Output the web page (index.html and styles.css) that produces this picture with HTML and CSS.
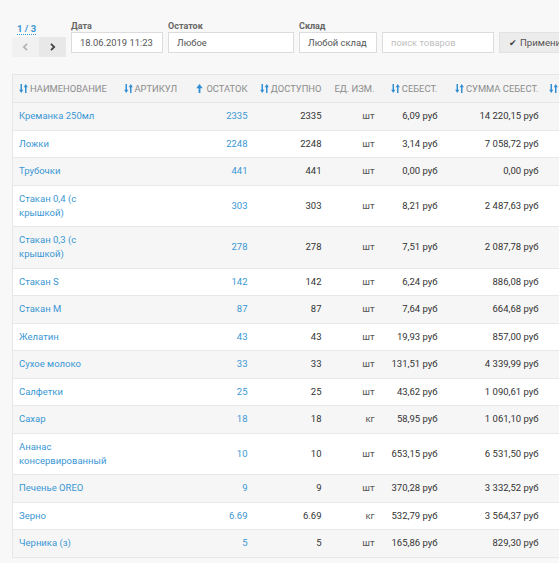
FILE: index.html
```html
<!DOCTYPE html>
<html lang="ru">
<head>
    <meta charset="UTF-8">
    <meta name="viewport" content="width=device-width, initial-scale=1.0">
    <title>Остатки товаров</title>
    <link rel="stylesheet" href="styles.css">
</head>
<body>
    <div class="page">
        <!-- Filters toolbar -->
        <div class="toolbar">
            <div class="pager">
                <span class="pager-count">1 / 3</span>
                <div class="pager-buttons">
                    <button class="pager-btn prev" disabled>
                        <svg width="7" height="8" viewBox="0 0 7 8"><path d="M5 0.8 L1.8 4 L5 7.2" fill="none" stroke="currentColor" stroke-width="1.8"/></svg>
                    </button>
                    <button class="pager-btn next">
                        <svg width="7" height="8" viewBox="0 0 7 8"><path d="M2 0.8 L5.2 4 L2 7.2" fill="none" stroke="currentColor" stroke-width="1.8"/></svg>
                    </button>
                </div>
            </div>
            <div class="field field-date">
                <label for="date">Дата</label>
                <input type="text" id="date" value="18.06.2019 11:23">
            </div>
            <div class="field field-rest">
                <label for="rest">Остаток</label>
                <input type="text" id="rest" value="Любое">
            </div>
            <div class="field field-store">
                <label for="store">Склад</label>
                <input type="text" id="store" value="Любой склад">
            </div>
            <div class="field field-search">
                <input type="text" id="search" placeholder="поиск товаров">
            </div>
            <div class="field field-apply">
                <button class="apply-btn"><span class="check">✔</span>Применить</button>
            </div>
        </div>

        <!-- Stock table -->
        <table class="stock">
            <colgroup>
                <col class="c-name"><col class="c-sku"><col class="c-rest"><col class="c-avail">
                <col class="c-unit"><col class="c-cost"><col class="c-sum"><col class="c-more">
            </colgroup>
            <thead>
                <tr>
                    <th class="left"><svg class="ico" viewBox="0 0 10 10"><path d="M1.7 0h1.6v6.3h1.5L2.5 10 0.2 6.3h1.5z M6.7 10h1.6V3.7h1.5L7.5 0 5.2 3.7h1.5z"/></svg>Наименование</th>
                    <th class="left"><svg class="ico" viewBox="0 0 10 10"><path d="M1.7 0h1.6v6.3h1.5L2.5 10 0.2 6.3h1.5z M6.7 10h1.6V3.7h1.5L7.5 0 5.2 3.7h1.5z"/></svg>Артикул</th>
                    <th><svg class="ico" viewBox="0 0 10 10"><path d="M4 10h2V4.6h2.6L5 0 1.4 4.6H4z"/></svg>Остаток</th>
                    <th><svg class="ico" viewBox="0 0 10 10"><path d="M1.7 0h1.6v6.3h1.5L2.5 10 0.2 6.3h1.5z M6.7 10h1.6V3.7h1.5L7.5 0 5.2 3.7h1.5z"/></svg>Доступно</th>
                    <th>Ед. изм.</th>
                    <th><svg class="ico" viewBox="0 0 10 10"><path d="M1.7 0h1.6v6.3h1.5L2.5 10 0.2 6.3h1.5z M6.7 10h1.6V3.7h1.5L7.5 0 5.2 3.7h1.5z"/></svg>Себест.</th>
                    <th><svg class="ico" viewBox="0 0 10 10"><path d="M1.7 0h1.6v6.3h1.5L2.5 10 0.2 6.3h1.5z M6.7 10h1.6V3.7h1.5L7.5 0 5.2 3.7h1.5z"/></svg>Сумма себест.</th>
                    <th class="left"><svg class="ico" viewBox="0 0 10 10"><path d="M1.7 0h1.6v6.3h1.5L2.5 10 0.2 6.3h1.5z M6.7 10h1.6V3.7h1.5L7.5 0 5.2 3.7h1.5z"/></svg></th>
                </tr>
            </thead>
            <tbody>
                <tr><td><a href="#">Креманка 250мл</a></td><td></td><td><a href="#">2335</a></td><td>2335</td><td class="unit">шт</td><td>6,09 руб</td><td>14 220,15 руб</td><td></td></tr>
                <tr><td><a href="#">Ложки</a></td><td></td><td><a href="#">2248</a></td><td>2248</td><td class="unit">шт</td><td>3,14 руб</td><td>7 058,72 руб</td><td></td></tr>
                <tr><td><a href="#">Трубочки</a></td><td></td><td><a href="#">441</a></td><td>441</td><td class="unit">шт</td><td>0,00 руб</td><td>0,00 руб</td><td></td></tr>
                <tr><td><a href="#">Стакан 0,4 (с крышкой)</a></td><td></td><td><a href="#">303</a></td><td>303</td><td class="unit">шт</td><td>8,21 руб</td><td>2 487,63 руб</td><td></td></tr>
                <tr><td><a href="#">Стакан 0,3 (с крышкой)</a></td><td></td><td><a href="#">278</a></td><td>278</td><td class="unit">шт</td><td>7,51 руб</td><td>2 087,78 руб</td><td></td></tr>
                <tr><td><a href="#">Стакан S</a></td><td></td><td><a href="#">142</a></td><td>142</td><td class="unit">шт</td><td>6,24 руб</td><td>886,08 руб</td><td></td></tr>
                <tr><td><a href="#">Стакан M</a></td><td></td><td><a href="#">87</a></td><td>87</td><td class="unit">шт</td><td>7,64 руб</td><td>664,68 руб</td><td></td></tr>
                <tr><td><a href="#">Желатин</a></td><td></td><td><a href="#">43</a></td><td>43</td><td class="unit">шт</td><td>19,93 руб</td><td>857,00 руб</td><td></td></tr>
                <tr><td><a href="#">Сухое молоко</a></td><td></td><td><a href="#">33</a></td><td>33</td><td class="unit">шт</td><td>131,51 руб</td><td>4 339,99 руб</td><td></td></tr>
                <tr><td><a href="#">Салфетки</a></td><td></td><td><a href="#">25</a></td><td>25</td><td class="unit">шт</td><td>43,62 руб</td><td>1 090,61 руб</td><td></td></tr>
                <tr><td><a href="#">Сахар</a></td><td></td><td><a href="#">18</a></td><td>18</td><td class="unit">кг</td><td>58,95 руб</td><td>1 061,10 руб</td><td></td></tr>
                <tr><td><a href="#">Ананас консервированный</a></td><td></td><td><a href="#">10</a></td><td>10</td><td class="unit">шт</td><td>653,15 руб</td><td>6 531,50 руб</td><td></td></tr>
                <tr><td><a href="#">Печенье OREO</a></td><td></td><td><a href="#">9</a></td><td>9</td><td class="unit">шт</td><td>370,28 руб</td><td>3 332,52 руб</td><td></td></tr>
                <tr><td><a href="#">Зерно</a></td><td></td><td><a href="#">6.69</a></td><td>6.69</td><td class="unit">кг</td><td>532,79 руб</td><td>3 564,37 руб</td><td></td></tr>
                <tr><td><a href="#">Черника (з)</a></td><td></td><td><a href="#">5</a></td><td>5</td><td class="unit">шт</td><td>165,86 руб</td><td>829,30 руб</td><td></td></tr>
            </tbody>
        </table>
    </div>
</body>
</html>
```

FILE: styles.css
```css
/* Base */
* { box-sizing: border-box; }
html, body { margin: 0; padding: 0; }
body {
    font-family: Roboto, "Liberation Sans", Arial, sans-serif;
    font-size: 10px;
    color: #333;
    background: #f8f8f8;
    width: 559px;
    height: 563px;
    overflow: hidden;
}

.page { padding: 20px 0 0 12px; }

/* Toolbar */
.toolbar {
    display: flex;
    align-items: flex-start;
    gap: 5px;
    height: 54px;
}

.pager { width: 54px; padding-top: 3px; }
.pager-count {
    display: inline-block;
    margin-left: 5px;
    font-size: 9.5px;
    font-weight: 700;
    line-height: 11px;
    color: #3a97d4;
    border-bottom: 1px dotted #3a97d4;
}
.pager-buttons { display: flex; margin-top: 2px; }
.pager-btn {
    width: 27px;
    height: 20px;
    border: none;
    padding: 0;
    display: flex;
    align-items: center;
    justify-content: center;
    background: #efefef;
    color: #555;
}
.pager-btn.prev { background: #f1f1f1; color: #b5b5b5; }
.pager-btn.next { background: #e8e8e8; color: #444; }

.field label {
    display: block;
    font-size: 9px;
    font-weight: 700;
    line-height: 12px;
    color: #666;
}
.field input {
    display: block;
    height: 21px;
    padding: 0 8px;
    border: 1px solid #dcdcdc;
    background: #fff;
    font-family: inherit;
    font-size: 9.4px;
    color: #555;
}
.field input::placeholder { color: #c0c0c0; }
.field-date input { width: 92px; padding: 0 6px 0 8px; }
.field-rest input { width: 126px; }
.field-store input { width: 78px; }
.field-search, .field-apply { padding-top: 12px; }
.field-search input { width: 112px; }

.apply-btn {
    height: 21px;
    width: 80px;
    padding: 0 0 0 9px;
    text-align: left;
    border: 1px solid #e2e2e2;
    background: #ececec;
    font-family: inherit;
    font-size: 9.6px;
    color: #555;
    white-space: nowrap;
}
.apply-btn .check { color: #444; font-size: 9px; margin-right: 3px; }

/* Table */
.stock {
    width: 640px;
    table-layout: fixed;
    border-collapse: collapse;
    background: #fff;
    border-left: 1px solid #e6e6e6;
    border-top: 1px solid #e6e6e6;
}
.c-name { width: 104px; }
.c-sku { width: 70px; }
.c-rest { width: 66px; }
.c-avail { width: 74px; }
.c-unit { width: 53px; }
.c-cost { width: 63px; }
.c-sum { width: 101px; }
.c-more { width: 109px; }

.stock th {
    height: 28px;
    padding: 0 5px;
    background: #f4f4f4;
    border-bottom: 1px solid #e6e6e6;
    font-size: 9.4px;
    font-weight: 400;
    text-transform: uppercase;
    color: #8c8c8c;
    text-align: right;
    white-space: nowrap;
    overflow: hidden;
}
.stock th.left { text-align: left; }
.stock th:first-child { padding-left: 6px; }
.stock th:nth-child(2) { padding-left: 7px; }

.ico {
    width: 9px;
    height: 9px;
    margin-right: 2px;
    vertical-align: -1px;
    fill: #2e8dd3;
}

.stock td {
    padding: 6.25px 5px;
    font-size: 9.5px;
    line-height: 14px;
    border-bottom: 1px solid #e8e8e8;
    text-align: right;
    vertical-align: middle;
}
.stock td:first-child { text-align: left; padding-left: 6px; }
.stock tbody tr:nth-child(odd) td { background: #f6f6f6; }
.stock td.unit { color: #555; }

.stock a { color: #3a97d4; text-decoration: none; }
```
